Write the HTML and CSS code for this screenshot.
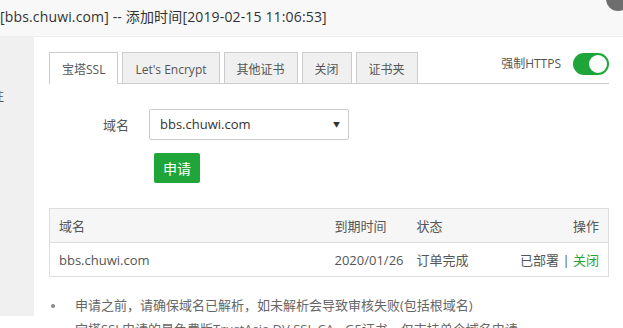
FILE: index.html
```html
<!DOCTYPE html>
<html>
<head>
<meta charset="utf-8" />
<title>SSL</title>
<link rel="stylesheet" href="styles.css">
</head>
<body>
<div class="layer">
	<div class="title">[bbs.chuwi.com] -- 添加时间[2019-02-15 11:06:53]</div>
	<span class="close-btn"></span>
	<div class="layout">
		<div class="side"><span class="side-item">注</span></div>
		<div class="main">
			<div class="tabbar">
				<div class="tabs">
					<span class="tab on">宝塔SSL</span>
					<span class="tab">Let's Encrypt</span>
					<span class="tab">其他证书</span>
					<span class="tab">关闭</span>
					<span class="tab">证书夹</span>
				</div>
				<div class="force">
					<span>强制HTTPS</span>
					<span class="switch"><i></i></span>
				</div>
			</div>

			<div class="line">
				<span class="tname">域名</span>
				<div class="select">bbs.chuwi.com<span class="arrow">▼</span></div>
			</div>
			<div class="line btn-line">
				<button class="btn-apply">申请</button>
			</div>

			<table class="table">
				<colgroup>
					<col class="c-name"><col class="c-date"><col class="c-state"><col>
				</colgroup>
				<thead>
					<tr><th>域名</th><th>到期时间</th><th>状态</th><th class="c-op">操作</th></tr>
				</thead>
				<tbody>
					<tr><td>bbs.chuwi.com</td><td>2020/01/26</td><td>订单完成</td><td class="c-op">已部署 | <a class="green">关闭</a></td></tr>
				</tbody>
			</table>

			<ul class="help">
				<li>申请之前，请确保域名已解析，如未解析会导致审核失败(包括根域名)</li>
				<li>宝塔SSL申请的是免费版TrustAsia DV SSL CA - G5证书，仅支持单个域名申请</li>
			</ul>
		</div>
	</div>
</div>
</body>
</html>
```

FILE: styles.css
```css
html, body { margin: 0; padding: 0; }
body { width: 623px; height: 328px; overflow: hidden; background: #fff;
	font-family: "Open Sans", "Noto Sans CJK SC", sans-serif; color: #555; font-size: 12px; }

.layer { position: relative; }
.title { height: 36px; line-height: 34px; background: #f8f8f8; border-bottom: 1px solid #eee;
	font-size: 14px; color: #333; white-space: nowrap; padding-left: 0; letter-spacing: 0.15px; }
.close-btn { position: absolute; left: 606px; top: -13px; width: 24px; height: 24px; border-radius: 50%; background: #6e6e6e; }

.layout { display: flex; }
.side { width: 34px; height: 279px; background: #f0f0f0; overflow: hidden; flex-shrink: 0; }
.side-item { display: block; margin: 50px 0 0 -8px; font-size: 12px; color: #555; }
.main { flex: 1; padding: 15px 14px 0 15px; }

.tabbar { display: flex; justify-content: space-between; border-bottom: 1px solid #ccc; height: 31px; }
.tabs { display: flex; gap: 4px; }
.tab { height: 30px; line-height: 34px; padding: 0 12px; border: 1px solid #ccc; border-bottom: 0;
	background: #f0f0f0; color: #555; font-size: 12px; }
.tab.on { background: #fff; height: 31px; }

.force { display: flex; align-items: flex-start; gap: 12px; color: #555; }
.force span:first-child { line-height: 22px; margin-top: 1px; }
.switch { display: block; width: 36px; height: 22px; border-radius: 11px; background: #20a53a; position: relative; margin-top: 1px; }
.switch i { position: absolute; right: 2px; top: 2px; width: 18px; height: 18px; border-radius: 50%; background: #fff; }

.line { display: flex; align-items: center; margin-top: 25px; }
.tname { width: 80px; text-align: right; padding-right: 20px; font-size: 13px; color: #555; }
.select { position: relative; width: 188px; height: 29px; line-height: 29px; border: 1px solid #ccc; border-radius: 2px;
	padding-left: 10px; font-size: 13px; color: #333; }
.arrow { position: absolute; right: 8px; top: 0; font-size: 7px; color: #333; }
.btn-line { margin-top: 13px; padding-left: 105px; }
.btn-apply { width: 46px; height: 30px; border: 0; border-radius: 2px; background: #20a53a; color: #fff;
	font-family: "Open Sans", "Noto Sans CJK SC", sans-serif; font-size: 14px; padding: 0; }

.table { width: 560px; margin-top: 25px; border-collapse: collapse; border: 1px solid #ddd; font-size: 13px; color: #555;
	table-layout: fixed; }
.table .c-name { width: 276px; }
.table .c-date { width: 82px; }
.table .c-state { width: 90px; }
.table th, .table td { height: 33px; padding: 0 9px; text-align: left; font-weight: normal; border-bottom: 1px solid #ddd; white-space: nowrap; }
.table thead tr { background: #f6f6f6; }
.table .c-op { text-align: right; }
.green { color: #20a53a; }

.help { margin: 16px 0 0 0; padding-left: 26px; font-size: 13px; color: #666; list-style: none; }
.help li { position: relative; line-height: 24px; white-space: nowrap; }
.help li:before { content: ""; position: absolute; left: -24px; top: 11px; width: 4px; height: 4px; border-radius: 50%; background: #888; }
```
